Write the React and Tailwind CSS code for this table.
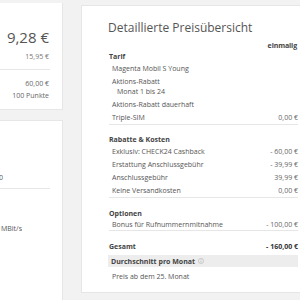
import React from "react";

const Row = ({ label, value, cls = "", labelCls = "", valueCls = "" }) => (
  <div className={`flex items-center justify-between ${cls}`}>
    <span className={labelCls}>{label}</span>
    {value !== undefined && <span className={valueCls}>{value}</span>}
  </div>
);

export default function App() {
  return (
    <div
      className="w-[300px] h-[300px] overflow-hidden bg-[#f2f2f2] flex text-[#555]"
      style={{ fontFamily: '"Open Sans", "Liberation Sans", sans-serif' }}
    >
      {/* left column */}
      <div className="w-[63px] shrink-0 flex flex-col gap-[10px] pt-[3px]">
        <div className="h-[107px] bg-white border-r border-b border-[#e6e6e6] flex flex-col">
          <div className="pr-[13px] flex flex-col items-end">
            <div className="h-[22px] mt-[23px] flex items-center text-[15px] leading-none text-[#555]">9,28 €</div>
            <div className="h-[10px] mt-[3px] flex items-center text-[7px] leading-none text-[#777]">15,95 €</div>
          </div>
          <div className="mt-[8px] mr-[12px] border-t border-[#e6e6e6]"></div>
          <div className="pr-[13px] flex flex-col items-end text-[7px] leading-none text-[#666]">
            <div className="h-[10px] mt-[8px] flex items-center">60,00 €</div>
            <div className="h-[10px] mt-[2px] flex items-center">100 Punkte</div>
          </div>
        </div>
        <div className="flex-1 bg-white border-r border-t border-[#e6e6e6] flex flex-col text-[7px] leading-none text-[#555]">
          <div className="h-[10px] mt-[51px] flex items-center -ml-[5px]">20</div>
          <div className="mt-[6px] mr-[12px] border-t border-[#e6e6e6]"></div>
          <div className="h-[10px] mt-[34px] flex items-center pl-[1px]">MBit/s</div>
        </div>
      </div>

      {/* right card */}
      <div className="ml-[18px] mt-[5px] w-[260px] shrink-0 h-[288px] bg-white border border-[#e6e6e6] pl-[27px] pr-[42px] pt-[14px] text-[7px] leading-none">
        <div className="h-[16px] flex items-center text-[12px] text-[#555] -ml-[1px]">
          Detaillierte Preisübersicht
        </div>
        <div className="h-[10px] mt-[4px] flex items-center justify-end font-bold text-[#444] tracking-[-0.1px] mr-[1px]">einmalig</div>

        <div className="h-[12px] flex items-center font-bold text-[#444]">Tarif</div>
        <div className="border-b border-[#e6e6e6] pb-0">
          <Row cls="h-[12px] pl-[3px]" label="Magenta Mobil S Young" />
          <Row cls="h-[12px] mt-[1px] pl-[3px]" label="Aktions-Rabatt" />
          <Row cls="h-[8px] pl-[8px]" label="Monat 1 bis 24" />
          <Row cls="h-[13px] mt-[3px] pl-[3px]" label="Aktions-Rabatt dauerhaft" />
          <Row cls="h-[13px] pl-[3px]" label="Triple-SIM" value="0,00 €" valueCls="text-[#666]" />
        </div>

        <div className="h-[12px] mt-[8px] flex items-center font-bold text-[#444]">Rabatte &amp; Kosten</div>
        <div className="border-b border-[#e6e6e6]">
          <Row cls="h-[13px] pl-[3px]" label="Exklusiv: CHECK24 Cashback" value="- 60,00 €" valueCls="text-[#666]" />
          <Row cls="h-[13px] pl-[3px]" label="Erstattung Anschlussgebühr" value="- 39,99 €" valueCls="text-[#666]" />
          <Row cls="h-[13px] pl-[3px]" label="Anschlussgebühr" value="39,99 €" valueCls="text-[#666]" />
          <Row cls="h-[13px] pl-[3px]" label="Keine Versandkosten" value="0,00 €" valueCls="text-[#666]" />
        </div>

        <div className="h-[12px] mt-[9px] flex items-center font-bold text-[#444]">Optionen</div>
        <div className="border-b border-[#e6e6e6]">
          <Row cls="h-[11px] pl-[3px]" label="Bonus für Rufnummernmitnahme" value="- 100,00 €" valueCls="text-[#666]" />
        </div>

        <Row
          cls="h-[12px] mt-[9px]"
          label="Gesamt"
          value="- 160,00 €"
          labelCls="font-bold text-[#444]"
          valueCls="font-bold text-[#333]"
        />
        <div className="h-[12px] mt-[3px] bg-[#ededed] flex items-center pl-[3px] -ml-[1px] font-bold text-[#444] gap-[3px]">
          <span>Durchschnitt pro Monat</span>
          <svg width="6" height="6" viewBox="0 0 12 12" fill="none">
            <circle cx="6" cy="6" r="5.2" stroke="#aaa" strokeWidth="1" />
            <rect x="5.4" y="5" width="1.2" height="4" fill="#aaa" />
            <rect x="5.4" y="2.8" width="1.2" height="1.2" fill="#aaa" />
          </svg>
        </div>
        <Row cls="h-[12px] mt-[3px] pl-[3px]" label="Preis ab dem 25. Monat" />
      </div>
    </div>
  );
}
